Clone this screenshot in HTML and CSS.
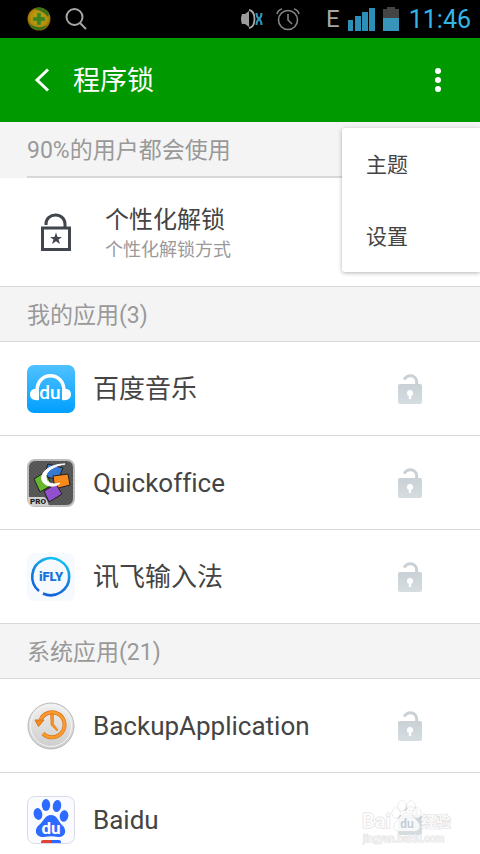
FILE: index.html
```html
<!DOCTYPE html>
<html lang="zh-CN">
<head>
    <meta charset="UTF-8">
    <meta name="viewport" content="width=device-width, initial-scale=1.0">
    <title>程序锁</title>
    <link rel="stylesheet" href="styles.css">
</head>
<body>
    <!-- 公用图标 -->
    <svg class="sprite" aria-hidden="true">
        <defs>
            <linearGradient id="lockFill" x1="0" y1="0" x2="0" y2="1">
                <stop offset="0" stop-color="#c9d1d6"/>
                <stop offset="1" stop-color="#d6dde1"/>
            </linearGradient>
        </defs>
        <symbol id="unlock" viewBox="0 0 24 30">
            <path d="M6.2 5.6C7.500 3 10 1.700 12.400 1.700C16 1.700 18.700 4.600 18.700 8V11" fill="none" stroke="#c9d1d6" stroke-width="3"/>
            <path fill="url(#lockFill)" fill-rule="evenodd" d="M2 10H22Q24 10 24 12V28Q24 30 22 30H2Q0 30 0 28V12Q0 10 2 10ZM12 16A3 3 0 0 0 10.800 21.800V25H13.200V21.800A3 3 0 0 0 12 16Z"/>
        </symbol>
    </svg>

    <div class="screen">
        <!-- 状态栏 -->
        <div class="status-bar">
            <div class="status-left">
                <svg width="24" height="24" viewBox="0 0 24 24">
                    <defs>
                        <radialGradient id="safe" cx="0.5" cy="0.45" r="0.55">
                            <stop offset="0" stop-color="#c1b010"/>
                            <stop offset="0.7" stop-color="#b98a0c"/>
                            <stop offset="1" stop-color="#7d6508"/>
                        </radialGradient>
                    </defs>
                    <circle cx="12" cy="12" r="11.5" fill="url(#safe)"/>
                    <path d="M7 2C12-1 19 1 22 7L21 10C17 5 12 3 7 2Z" fill="#3c7219"/>
                    <path d="M2 16C6 20 13 22 20 18C16 25 5 25 2 16Z" fill="#3c7219"/>
                    <path d="M10 6H14V10H18V14H14V18H10V14H6V10H10Z" fill="#3f8220" stroke="#7c9b20" stroke-width="0.6"/>
                </svg>
                <svg width="22" height="22" viewBox="0 0 22 22" fill="none" stroke="#a6a6a6" stroke-width="2">
                    <circle cx="9.5" cy="9" r="8"/>
                    <path d="M15 15L21 21"/>
                </svg>
            </div>
            <div class="status-right">
                <svg class="mute" width="22" height="20" viewBox="0 0 22 20" fill="none">
                    <path d="M1 5H4L8 2V18L4 15H1Q-1 10 1 5Z" fill="#9c9c9c"/>
                    <path d="M8 1Q13.500 2 13.500 10Q13.500 18 8 19" stroke="#a6a6a6" stroke-width="1.800"/>
                    <path d="M15.500 4Q15.500 8 18 10Q20.500 12 20.500 16M20.500 4Q20.500 8 18 10Q15.500 12 15.500 16" stroke="#2f96bd" stroke-width="2"/>
                </svg>
                <svg class="alarm" width="24" height="24" viewBox="0 0 24 24" fill="none" stroke="#858585" stroke-width="1.6">
                    <circle cx="12" cy="13" r="9.5"/>
                    <path d="M12 7V13L16 17M1 7Q2 3 6 2M18 2Q22 3 23 7"/>
                </svg>
                <span class="network">E</span>
                <svg class="signal" width="27" height="24" viewBox="0 0 27 24" fill="#2b8fb8">
                    <path d="M0 13H5V24H0ZM7 9H13V24H7ZM14 5H20V24H14ZM21 1H27V24H21Z"/>
                </svg>
                <svg class="battery" width="16" height="24" viewBox="0 0 16 24">
                    <path d="M4 0H12V2H16V12H0V2H4Z" fill="#444"/>
                    <path d="M0 11H16V24H0Z" fill="#3894b8"/>
                </svg>
                <span class="clock">11:46</span>
            </div>
        </div>

        <!-- 标题栏 -->
        <header class="header">
            <button class="icon-btn back" aria-label="返回">
                <svg width="16" height="24" viewBox="0 0 16 24" fill="none" stroke="#fff" stroke-width="3">
                    <path d="M14 1.500L3 12L14 22.500"/>
                </svg>
            </button>
            <h1 class="title">程序锁</h1>
            <button class="icon-btn more" aria-label="更多">
                <svg width="6" height="24" viewBox="0 0 6 24" fill="#fff">
                    <circle cx="3" cy="3" r="3"/>
                    <circle cx="3" cy="12" r="3"/>
                    <circle cx="3" cy="21" r="3"/>
                </svg>
            </button>
            <!-- 弹出菜单 -->
            <div class="menu">
                <button class="menu-item">主题</button>
                <button class="menu-item">设置</button>
            </div>
        </header>

        <main class="content">
            <h2 class="section section-first"><span>90%的用户都会使用</span></h2>
            <a class="feature" href="#">
                <svg width="32" height="38" viewBox="0 0 32 38">
                    <path d="M6 12V11C6 5.500 10.500 2 15.500 2C21 2 25 6 25 11V15" fill="none" stroke="#41454c" stroke-width="3"/>
                    <rect x="2.500" y="15" width="27" height="21.500" fill="none" stroke="#41454c" stroke-width="3"/>
                    <path d="M16 19.500L17.500 24H22L18.500 26.500L20 31L16 28.300L12 31L13.500 26.500L10 24H14.500Z" fill="#41454c"/>
                </svg>
                <span class="feature-text">
                    <span class="feature-name">个性化解锁</span>
                    <span class="feature-desc">个性化解锁方式</span>
                </span>
            </a>

            <h2 class="section">我的应用(3)</h2>
            <ul class="app-list">
                <li class="app">
                    <svg width="48" height="48" viewBox="0 0 48 48">
                        <defs>
                            <linearGradient id="music" x1="0" y1="0" x2="0" y2="1">
                                <stop offset="0" stop-color="#50c1ff"/>
                                <stop offset="1" stop-color="#009fff"/>
                            </linearGradient>
                        </defs>
                        <rect width="48" height="48" rx="7" fill="url(#music)"/>
                        <path d="M10 26C10 5.500 37 5.500 37 26" fill="none" stroke="#fff" stroke-width="3.500"/>
                        <path d="M8.500 24Q12 24 12 27V35C6 36 3 33 3 29.500C3 26 5 24 8.500 24ZM38.500 24Q35 24 35 27V35C41 36 44 33 44 29.500C44 26 42 24 38.500 24Z" fill="#fff"/>
                        <text class="logo-music" x="23" y="34" text-anchor="middle">du</text>
                    </svg>
                    <span class="app-name">百度音乐</span>
                    <button class="lock-btn" aria-label="锁定百度音乐"><svg width="24" height="30"><use href="#unlock"/></svg></button>
                </li>
                <li class="app">
                    <svg width="48" height="48" viewBox="0 0 48 48">
                        <defs>
                            <pattern id="mesh" width="4" height="4" patternUnits="userSpaceOnUse">
                                <rect width="4" height="4" fill="#5c5c5c"/>
                                <circle cx="1" cy="1" r="0.8" fill="#454545"/>
                                <circle cx="3" cy="3" r="0.8" fill="#454545"/>
                            </pattern>
                        </defs>
                        <rect x="1" y="1" width="46" height="46" rx="7" fill="url(#mesh)" stroke="#bcbcbc" stroke-width="2"/>
                        <path d="M21 5L36 9L31 21L17 17Z" fill="#3679d2" stroke="#202020"/>
                        <path d="M7 20L18 13L25 26L13 33Z" fill="#68b52e" stroke="#202020"/>
                        <path d="M26 17L41 15L43 26L28 30Z" fill="#f88a1c" stroke="#202020"/>
                        <path d="M17 32L29 25L35 35L22 43Z" fill="#9250cc" stroke="#202020"/>
                        <path d="M38 5C23 5 13 13 15 21C17 28 29 29 33 24C28 26 20 25 19 19C18 12 27 7 38 5Z" fill="#fff" stroke="#fff"/>
                        <path d="M1 38H17Q20 39 22 47H7Q1 47 1 41Z" fill="#d0d0d0"/>
                        <text class="logo-pro" x="3" y="45">PRO</text>
                    </svg>
                    <span class="app-name">Quickoffice</span>
                    <button class="lock-btn" aria-label="锁定Quickoffice"><svg width="24" height="30"><use href="#unlock"/></svg></button>
                </li>
                <li class="app">
                    <svg width="48" height="48" viewBox="0 0 48 48">
                        <defs>
                            <linearGradient id="ifly" x1="0.7" y1="0" x2="0.3" y2="1">
                                <stop offset="0" stop-color="#12c5f2"/>
                                <stop offset="0.5" stop-color="#147fe0"/>
                                <stop offset="1" stop-color="#1261d8"/>
                            </linearGradient>
                        </defs>
                        <rect width="48" height="48" rx="8" fill="#f6f9fd"/>
                        <path d="M12 38A18.500 18.500 0 1 1 16 40.500" fill="none" stroke="url(#ifly)" stroke-width="2.600"/>
                        <text class="logo-ifly" x="24" y="28" text-anchor="middle">iFLY</text>
                    </svg>
                    <span class="app-name">讯飞输入法</span>
                    <button class="lock-btn" aria-label="锁定讯飞输入法"><svg width="24" height="30"><use href="#unlock"/></svg></button>
                </li>
            </ul>

            <h2 class="section">系统应用(21)</h2>
            <ul class="app-list">
                <li class="app">
                    <svg width="48" height="48" viewBox="0 0 48 48">
                        <defs>
                            <linearGradient id="disc" x1="0" y1="0" x2="0" y2="1">
                                <stop offset="0" stop-color="#f0f0f0"/>
                                <stop offset="1" stop-color="#cdcdcd"/>
                            </linearGradient>
                        </defs>
                        <circle cx="24" cy="24" r="23" fill="url(#disc)" stroke="#b8b8b8"/>
                        <circle cx="24" cy="24" r="20.500" fill="none" stroke="#f5f5f5"/>
                        <path d="M13.500 18A12.500 12.500 0 1 1 16 31.500" fill="none" stroke="#db741a" stroke-width="4"/>
                        <path d="M13.500 18A12.500 12.500 0 1 1 16 31.500" fill="none" stroke="#f99b2e" stroke-width="2.600"/>
                        <path d="M8 18H17L11.500 24.500Z" fill="#f58a20" stroke="#db741a"/>
                        <path d="M23.500 12H26.500V22L31 28L30 29L24 23Z" fill="#f99227" stroke="#db741a" stroke-width="0.600"/>
                    </svg>
                    <span class="app-name">BackupApplication</span>
                    <button class="lock-btn" aria-label="锁定BackupApplication"><svg width="24" height="30"><use href="#unlock"/></svg></button>
                </li>
                <li class="app">
                    <svg width="48" height="48" viewBox="0 0 48 48">
                        <rect x="0.500" y="0.500" width="47" height="47" rx="7" fill="#fafbfe" stroke="#d9dce8"/>
                        <g fill="#2d6aff">
                            <ellipse cx="19" cy="9" rx="4.200" ry="6"/>
                            <ellipse cx="30" cy="10" rx="4.200" ry="6" transform="rotate(10 30 10)"/>
                            <ellipse cx="11" cy="18" rx="4.300" ry="6" transform="rotate(-12 11 18)"/>
                            <ellipse cx="37" cy="20" rx="4.300" ry="5.800" transform="rotate(10 37 20)"/>
                            <path d="M24 19C30 19 31 25 35 29C41 34 38 42 31 41C26 40 22 40 17 41C9 42 6 34 12 29C17 25 18 19 24 19Z"/>
                        </g>
                        <text class="logo-baidu" x="24" y="38" text-anchor="middle">du</text>
                        <path d="M14 47V46Q14 44 16 44H24V47Z" fill="#df4332"/>
                        <path d="M24 44H32Q34 44 34 46V47H24Z" fill="#2d6aff"/>
                    </svg>
                    <span class="app-name">Baidu</span>
                    <button class="lock-btn" aria-label="锁定Baidu"><svg width="24" height="30"><use href="#unlock"/></svg></button>
                </li>
            </ul>
        </main>

        <!-- 水印 -->
        <div class="watermark">
            <svg width="92" height="46" viewBox="0 0 92 46">
                <g class="mark">
                    <text class="mark-logo" x="0" y="28">Bai</text>
                    <ellipse cx="34" cy="13" rx="4" ry="5"/>
                    <ellipse cx="40" cy="6" rx="4" ry="5"/>
                    <ellipse cx="49" cy="6" rx="4" ry="5"/>
                    <ellipse cx="55" cy="13" rx="4" ry="5"/>
                    <path d="M45 13C50 13 52 18 56 22C60 28 56 32 50 31H40C32 32 30 27 34 22C38 18 40 13 45 13Z"/>
                    <text class="mark-cn" x="59" y="27">经验</text>
                    <text class="mark-url" x="1" y="42">jingyan.baidu.com</text>
                </g>
                <text class="mark-du" x="45" y="28" text-anchor="middle">du</text>
            </svg>
        </div>
    </div>
</body>
</html>
```
FILE: styles.css
```css
* {
    box-sizing: border-box;
    margin: 0;
    padding: 0;
}

body {
    background-color: #fff;
    color: #444;
    font-family: Roboto, "Noto Sans CJK SC", sans-serif;
    font-variant-ligatures: none;
}

button {
    border: none;
    background: none;
    color: inherit;
    font: inherit;
    cursor: pointer;
}

svg {
    display: block;
    flex-shrink: 0;
}

.sprite {
    position: absolute;
    width: 0;
    height: 0;
}

.screen {
    position: relative;
    display: flex;
    flex-direction: column;
    height: 100vh;
    overflow: hidden;
}

/* 状态栏 */
.status-bar {
    display: flex;
    flex-shrink: 0;
    justify-content: space-between;
    align-items: center;
    height: 38px;
    padding: 0 9px 0 27px;
    background-color: #000;
}

.status-left,
.status-right {
    display: flex;
    align-items: center;
}

.status-left {
    gap: 14px;
}

.status-right {
    gap: 8px;
}

.mute {
    margin-right: 5px;
}

.network {
    margin-left: 18px;
    color: #a6a6a6;
    font-size: 24px;
    line-height: 28px;
}

.clock {
    padding-top: 2px;
    margin-left: 2px;
    color: #33b5e5;
    font-size: 25px;
    line-height: 36px;
}

/* 标题栏 */
.header {
    position: relative;
    z-index: 1;
    display: flex;
    flex-shrink: 0;
    align-items: center;
    height: 84px;
    padding: 0 27px;
    background-color: #009900;
    color: #fff;
}

.icon-btn {
    display: flex;
    justify-content: center;
    align-items: center;
    width: 30px;
    height: 48px;
}

.title {
    flex: 1;
    padding: 2px 0 0 16px;
    font-size: 27px;
    font-weight: 400;
    line-height: 40px;
}

/* 弹出菜单 */
.menu {
    position: absolute;
    top: 90px;
    right: 0;
    width: 138px;
    border-radius: 3px 0 0 3px;
    background-color: #fff;
    box-shadow: 0 1px 4px rgba(0, 0, 0, 0.3);
    color: #444;
}

.menu-item {
    display: block;
    width: 100%;
    height: 72px;
    padding: 0 24px 2px;
    font-size: 21px;
    text-align: left;
}

/* 分组标题 */
.content {
    flex: 1;
    min-height: 0;
    overflow: hidden;
}

.section {
    height: 56px;
    padding: 0 27px;
    border-top: 1px solid #d8d8d8;
    border-bottom: 1px solid #d8d8d8;
    background-color: #f4f4f4;
    color: #999;
    font-size: 23px;
    font-weight: 400;
    line-height: 58px;
}

.section-first {
    padding-right: 0;
    border: none;
}

.section-first span {
    display: block;
    height: 56px;
    border-bottom: 2px solid #d8d8d8;
}

/* 个性化解锁 */
.feature {
    display: flex;
    align-items: center;
    gap: 33px;
    height: 108px;
    padding: 0 40px;
    color: #444;
    text-decoration: none;
}

.feature-text {
    display: flex;
    flex-direction: column;
    padding-top: 4px;
}

.feature-name {
    font-size: 24px;
    line-height: 32px;
}

.feature-desc {
    color: #999;
    font-size: 18px;
    line-height: 28px;
}

/* 应用列表 */
.app-list {
    list-style: none;
}

.app {
    display: flex;
    align-items: center;
    gap: 18px;
    height: 94px;
    padding: 0 52px 0 27px;
    border-bottom: 1px solid #d8d8d8;
}

/* 最后一行的底线由下一个分组标题画出 */
.app:last-child {
    height: 93px;
    border-bottom: none;
}

.app-name {
    flex: 1;
    font-size: 26px;
    line-height: 40px;
}

.lock-btn {
    padding: 6px;
}

/* 图标里的文字 */
.logo-music {
    fill: #fff;
    font-size: 19px;
    font-weight: 500;
}

.logo-pro {
    fill: #222;
    font-size: 8px;
    font-weight: 900;
}

.logo-ifly {
    fill: #1474dc;
    font-size: 13px;
    font-weight: 900;
}

.logo-baidu {
    fill: #fff;
    font-size: 17px;
    font-weight: 700;
}

/* 水印 */
.watermark {
    position: absolute;
    right: 26px;
    bottom: 8px;
    pointer-events: none;
}

.mark {
    fill: #fff;
    fill-opacity: 0.8;
    stroke: #ddd;
    stroke-width: 1px;
    paint-order: stroke;
}

.mark-logo {
    font-size: 20px;
    font-weight: 700;
}

.mark-cn {
    font-size: 15px;
    font-weight: 700;
}

.mark-url {
    font-size: 10px;
}

.mark-du {
    fill: #c5cdd2;
    font-size: 12px;
    font-weight: 700;
}
```
